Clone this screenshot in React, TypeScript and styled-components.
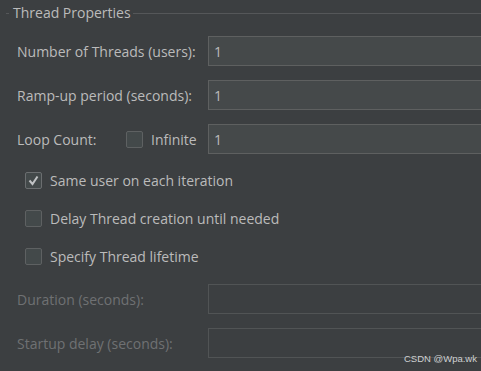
import React from 'react'
import styled, { createGlobalStyle } from 'styled-components'

const GlobalStyle = createGlobalStyle`
  html, body {
    margin: 0;
    padding: 0;
    background: #3c3f41;
  }
  body {
    font-family: "Open Sans", "Noto Sans", "DejaVu Sans", sans-serif;
  }
`

const Page = styled.div`
  position: relative;
  width: 481px;
  height: 371px;
  overflow: hidden;
  background: #3c3f41;
  color: #bbbbbb;
  font-size: 14px;
`

const Panel = styled.div`
  width: 520px;
  display: flex;
  flex-direction: column;
`

const TitleRow = styled.div`
  display: flex;
  align-items: center;
  height: 26px;
  padding-left: 6px;
`

const Rule = styled.div<{ $grow?: boolean; $w?: number }>`
  height: 1px;
  background: #555759;
  flex: ${({ $grow }) => ($grow ? '1' : 'none')};
  width: ${({ $w }) => ($w ? `${$w}px` : 'auto')};
`

const Title = styled.span`
  padding: 0 2px 0 4px;
  line-height: 20px;
`

const FieldGroup = styled.div<{ $top: number }>`
  display: flex;
  flex-direction: column;
  gap: 14px;
  margin-top: ${({ $top }) => $top}px;
`

const FieldRow = styled.div`
  display: grid;
  grid-template-columns: 191px 1fr;
  align-items: center;
  height: 30px;
  padding-left: 17px;
`

const Label = styled.span<{ $disabled?: boolean }>`
  color: ${({ $disabled }) => ($disabled ? '#6f7173' : '#bbbbbb')};
  white-space: nowrap;
`

const LoopLabel = styled.div`
  display: flex;
  align-items: center;
`

const LoopText = styled.span`
  width: 109px;
`

const Input = styled.div<{ $disabled?: boolean }>`
  box-sizing: border-box;
  height: 30px;
  padding-left: 5px;
  display: flex;
  align-items: center;
  background: ${({ $disabled }) => ($disabled ? '#3c3f41' : '#45494a')};
  border: 1px solid ${({ $disabled }) => ($disabled ? '#515455' : '#5e6060')};
  color: #bbbbbb;
`

const CheckList = styled.div`
  display: flex;
  flex-direction: column;
  padding: 7px 0 0 25px;
`

const CheckRow = styled.label`
  display: flex;
  align-items: center;
  gap: 8px;
  height: 38px;
`

const InlineCheck = styled.label`
  display: flex;
  align-items: center;
  gap: 8px;
`

const Box = styled.span<{ $checked?: boolean }>`
  box-sizing: border-box;
  width: 17px;
  height: 17px;
  border: 1px solid ${({ $checked }) => ($checked ? '#6b6e70' : '#5e6162')};
  border-radius: 2px;
  background: #43494a;
  display: flex;
  align-items: center;
  justify-content: center;
`

const Watermark = styled.div`
  position: absolute;
  right: 4px;
  bottom: 7px;
  font-family: "Liberation Sans", Arial, sans-serif;
  font-size: 9.5px;
  line-height: 10px;
  color: #cfd1d2;
`

const Checkbox = ({ checked }: { checked?: boolean }) => (
  <Box $checked={checked}>
    {checked && (
      <svg width="13" height="13" viewBox="0 0 13 13">
        <polyline points="2.5,6.5 5.5,10 10.5,2.5" fill="none" stroke="#c0c2c4" strokeWidth="2" />
      </svg>
    )}
  </Box>
)

export default function App() {
  return (
    <Page>
      <GlobalStyle />
      <Panel>
        <TitleRow>
          <Rule $w={3} />
          <Title>Thread Properties</Title>
          <Rule $grow />
        </TitleRow>

        <FieldGroup $top={10}>
          <FieldRow>
            <Label>Number of Threads (users):</Label>
            <Input>1</Input>
          </FieldRow>
          <FieldRow>
            <Label>Ramp-up period (seconds):</Label>
            <Input>1</Input>
          </FieldRow>
          <FieldRow>
            <LoopLabel>
              <LoopText>Loop Count:</LoopText>
              <InlineCheck>
                <Checkbox />
                <Label>Infinite</Label>
              </InlineCheck>
            </LoopLabel>
            <Input>1</Input>
          </FieldRow>
        </FieldGroup>

        <CheckList>
          <CheckRow>
            <Checkbox checked />
            <Label>Same user on each iteration</Label>
          </CheckRow>
          <CheckRow>
            <Checkbox />
            <Label>Delay Thread creation until needed</Label>
          </CheckRow>
          <CheckRow>
            <Checkbox />
            <Label>Specify Thread lifetime</Label>
          </CheckRow>
        </CheckList>

        <FieldGroup $top={9}>
          <FieldRow>
            <Label $disabled>Duration (seconds):</Label>
            <Input $disabled />
          </FieldRow>
          <FieldRow>
            <Label $disabled>Startup delay (seconds):</Label>
            <Input $disabled />
          </FieldRow>
        </FieldGroup>
      </Panel>
      <Watermark>CSDN @Wpa.wk</Watermark>
    </Page>
  )
}
